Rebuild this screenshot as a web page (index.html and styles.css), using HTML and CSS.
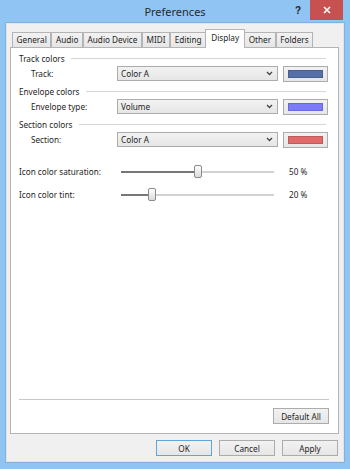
FILE: index.html
```html
<!DOCTYPE html>
<html lang="en">
<head>
    <meta charset="UTF-8">
    <title>Preferences</title>
    <link rel="stylesheet" href="styles.css">
</head>
<body>

    <div class="window">
        <!-- Title bar -->
        <div class="titlebar">
            <span></span>
            <span class="title">Preferences</span>
            <div class="caption-btns">
                <span class="help">?</span>
                <span class="close">
                    <svg width="8" height="8" viewBox="0 0 8 8"><path d="M1 1 L7 7 M7 1 L1 7" stroke="#fff" stroke-width="1.6"/></svg>
                </span>
            </div>
        </div>

        <div class="client">
            <!-- Tabs -->
            <div class="tabs">
                <span class="tab">General</span>
                <span class="tab">Audio</span>
                <span class="tab">Audio Device</span>
                <span class="tab">MIDI</span>
                <span class="tab">Editing</span>
                <span class="tab active">Display</span>
                <span class="tab">Other</span>
                <span class="tab">Folders</span>
            </div>

            <div class="panel">
                <div class="group-title"><span>Track colors</span><i></i></div>
                <div class="row">
                    <label>Track:</label>
                    <div class="combo">Color A
                        <svg width="7" height="5" viewBox="0 0 7 5"><path d="M1 1 L3.5 3.5 L6 1" fill="none" stroke="#444" stroke-width="1.3"/></svg>
                    </div>
                    <div class="swatch"><span class="c-track"></span></div>
                </div>

                <div class="group-title"><span>Envelope colors</span><i></i></div>
                <div class="row">
                    <label>Envelope type:</label>
                    <div class="combo">Volume
                        <svg width="7" height="5" viewBox="0 0 7 5"><path d="M1 1 L3.5 3.5 L6 1" fill="none" stroke="#444" stroke-width="1.3"/></svg>
                    </div>
                    <div class="swatch"><span class="c-envelope"></span></div>
                </div>

                <div class="group-title"><span>Section colors</span><i></i></div>
                <div class="row">
                    <label>Section:</label>
                    <div class="combo">Color A
                        <svg width="7" height="5" viewBox="0 0 7 5"><path d="M1 1 L3.5 3.5 L6 1" fill="none" stroke="#444" stroke-width="1.3"/></svg>
                    </div>
                    <div class="swatch"><span class="c-section"></span></div>
                </div>

                <div class="slider-row first">
                    <label>Icon color saturation:</label>
                    <div class="slider">
                        <div class="fill" style="width: 50%"></div>
                        <div class="thumb" style="left: calc(50% - 4px)"></div>
                    </div>
                    <span class="value">50 %</span>
                </div>
                <div class="slider-row">
                    <label>Icon color tint:</label>
                    <div class="slider">
                        <div class="fill" style="width: 20%"></div>
                        <div class="thumb" style="left: calc(20% - 4px)"></div>
                    </div>
                    <span class="value">20 %</span>
                </div>

                <div class="spacer"></div>
                <div class="sep"></div>
                <div class="panel-footer">
                    <button class="btn">Default All</button>
                </div>
            </div>

            <!-- Dialog buttons -->
            <div class="dialog-buttons">
                <button class="btn default">OK</button>
                <button class="btn">Cancel</button>
                <button class="btn">Apply</button>
            </div>
        </div>
    </div>

</body>
</html>
```

FILE: styles.css
```css
body {
    margin: 0;
    font-family: 'Noto Sans', 'Open Sans', sans-serif;
    font-size: 8.2px;
    color: #1e1e1e;
}

/* Window frame */
.window {
    width: 350px;
    height: 469px;
    box-sizing: border-box;
    padding: 0 7px 7px 7px;
    background: #8fc4f3;
    display: flex;
    flex-direction: column;
}

.titlebar {
    height: 23px;
    flex-shrink: 0;
    display: grid;
    grid-template-columns: 1fr auto 1fr;
}

.title {
    font-size: 11px;
    color: #2a2a2a;
    line-height: 23px;
}

.caption-btns {
    justify-self: end;
    display: flex;
    align-items: flex-start;
}

.help {
    font-family: 'Liberation Sans', sans-serif;
    font-weight: bold;
    font-size: 10px;
    color: #222;
    margin: 5px 9px 0 0;
}

.close {
    width: 33px;
    height: 20px;
    background: #c75050;
    display: flex;
    align-items: center;
    justify-content: center;
}

/* Client area */
.client {
    flex: 1;
    background: #f0f0f0;
    border: 1px solid #e4e4e4;
    box-shadow: 0 0 0 1px #7fb2df;
    margin: 0 -1px;
    display: flex;
    flex-direction: column;
}

.tabs {
    display: flex;
    align-items: flex-end;
    height: 18px;
    margin: 5px 4px 0 5px;
    position: relative;
    z-index: 1;
}

.tab {
    flex-shrink: 0;
    white-space: nowrap;
    height: 15px;
    box-sizing: border-box;
    padding: 0 3.6px;
    line-height: 14px;
    border: 1px solid #b4b4b4;
    border-bottom: none;
    background: linear-gradient(#f2f2f2, #e6e6e6);
}

.tab.active {
    height: 19px;
    margin: 0 -1px -1px -1px;
    padding: 0 5px;
    line-height: 16px;
    background: #fff;
    position: relative;
}

.panel {
    flex: 1;
    margin: 0 4px 0 3px;
    background: #fff;
    border: 1px solid #b4b4b4;
    padding: 3px 9px 9px 8px;
    display: flex;
    flex-direction: column;
}

.group-title {
    height: 14px;
    display: flex;
    align-items: center;
}

.group-title i {
    flex: 1;
    height: 1px;
    background: #d5d5d5;
    margin: 1px 3px 0 6px;
}

.row {
    height: 17px;
    margin-bottom: 2px;
    display: flex;
    align-items: center;
}

.row label {
    width: 86px;
    padding-left: 12px;
}

.combo {
    width: 161px;
    height: 15px;
    box-sizing: border-box;
    border: 1px solid #acacac;
    background: linear-gradient(#f2f2f2, #e6e6e6);
    padding: 0 4px 0 3px;
    display: flex;
    align-items: center;
    justify-content: space-between;
}

.swatch {
    width: 45px;
    height: 16px;
    box-sizing: border-box;
    margin-left: 5px;
    border: 1px solid #acacac;
    background: linear-gradient(#f2f2f2, #e6e6e6);
    padding: 3px 4px;
}

.swatch span {
    display: block;
    height: 100%;
    box-sizing: border-box;
    border: 1px solid rgba(0, 0, 0, 0.15);
}

.c-track { background: #5570a9; }
.c-envelope { background: #7b7bfe; }
.c-section { background: #e06a6a; }

/* Sliders */
.slider-row {
    height: 17px;
    margin-top: 6px;
    display: flex;
    align-items: center;
}

.slider-row.first {
    margin-top: 13px;
}

.slider-row label {
    width: 102px;
}

.slider {
    width: 153px;
    height: 2px;
    background: #d2d2d2;
    position: relative;
}

.slider .fill {
    height: 2px;
    background: #777;
}

.thumb {
    position: absolute;
    top: -6px;
    width: 8px;
    height: 13px;
    box-sizing: border-box;
    border: 1px solid #8a8a8a;
    border-radius: 2px;
    background: linear-gradient(#fdfdfd, #dcdcdc);
}

.value {
    margin-left: 15px;
}

.spacer {
    flex: 1;
}

.sep {
    height: 1px;
    background: #c8c8c8;
}

.panel-footer {
    display: flex;
    justify-content: flex-end;
    margin-top: 8px;
}

/* Buttons */
.btn {
    width: 56px;
    height: 16px;
    padding: 0;
    font-family: inherit;
    font-size: inherit;
    color: #1e1e1e;
    border: 1px solid #acacac;
    background: linear-gradient(#f2f2f2, #e6e6e6);
}

.btn.default {
    border-color: #5fa5e0;
}

.dialog-buttons {
    display: flex;
    justify-content: flex-end;
    gap: 7px;
    margin: 6px 5px 5px 0;
}
```
